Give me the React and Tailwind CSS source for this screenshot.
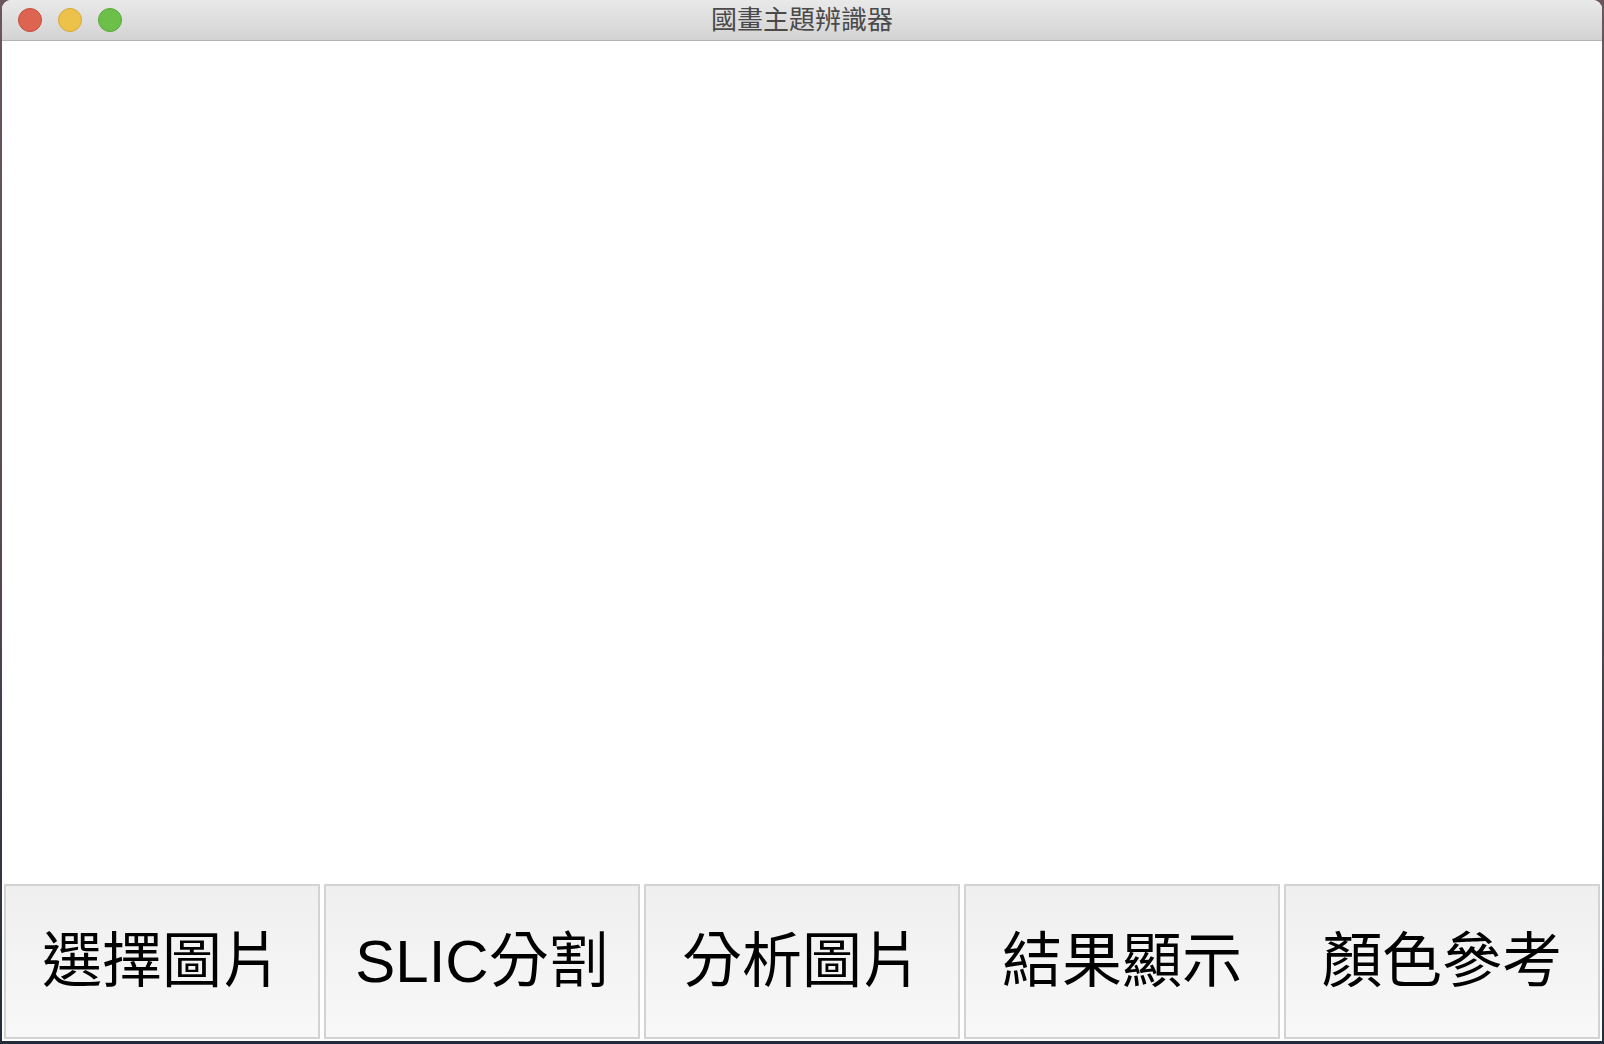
import React from 'react';

const cjk = { fontFamily: '"Liberation Sans", "Noto Sans CJK TC", sans-serif' };

const buttons = ['選擇圖片', 'SLIC分割', '分析圖片', '結果顯示', '顏色參考'];

function TrafficLights() {
  return (
    <div className="absolute left-[16px] top-[8px] flex gap-[16px]">
      <span className="block h-[24px] w-[24px] rounded-full border border-[#c44d3c] bg-[#dc6450]" />
      <span className="block h-[24px] w-[24px] rounded-full border border-[#d4a93a] bg-[#ecc24a]" />
      <span className="block h-[24px] w-[24px] rounded-full border border-[#5aa63c] bg-[#6cbf48]" />
    </div>
  );
}

export default function App() {
  return (
    <div className="h-[1044px] w-[1604px] overflow-hidden bg-gradient-to-b from-[#6a565c] via-[#5a4a55] to-[#222c3a]">
      <div className="ml-[2px] flex h-[1041px] w-[1600px] flex-col overflow-hidden rounded-t-[9px] bg-white">
        {/* title bar */}
        <div className="relative flex h-[41px] shrink-0 items-center justify-center border-b border-[#b3b3b3] bg-gradient-to-b from-[#e9e9e9] to-[#d3d3d3]">
          <TrafficLights />
          <span className="text-[26px] leading-none text-[#4a4a4a]" style={cjk}>
            國畫主題辨識器
          </span>
        </div>

        {/* canvas area */}
        <div className="flex-1 bg-white" />

        {/* button row */}
        <div className="flex gap-[4px] bg-white px-[2px] pb-[2px]">
          {buttons.map((label) => (
            <button
              key={label}
              className="flex h-[155px] flex-1 items-center justify-center border-2 border-[#d3d3d3] bg-gradient-to-b from-[#efefef] to-[#f8f8f8] text-[60px] leading-none text-black"
              style={cjk}
            >
              {label}
            </button>
          ))}
        </div>
      </div>
    </div>
  );
}
